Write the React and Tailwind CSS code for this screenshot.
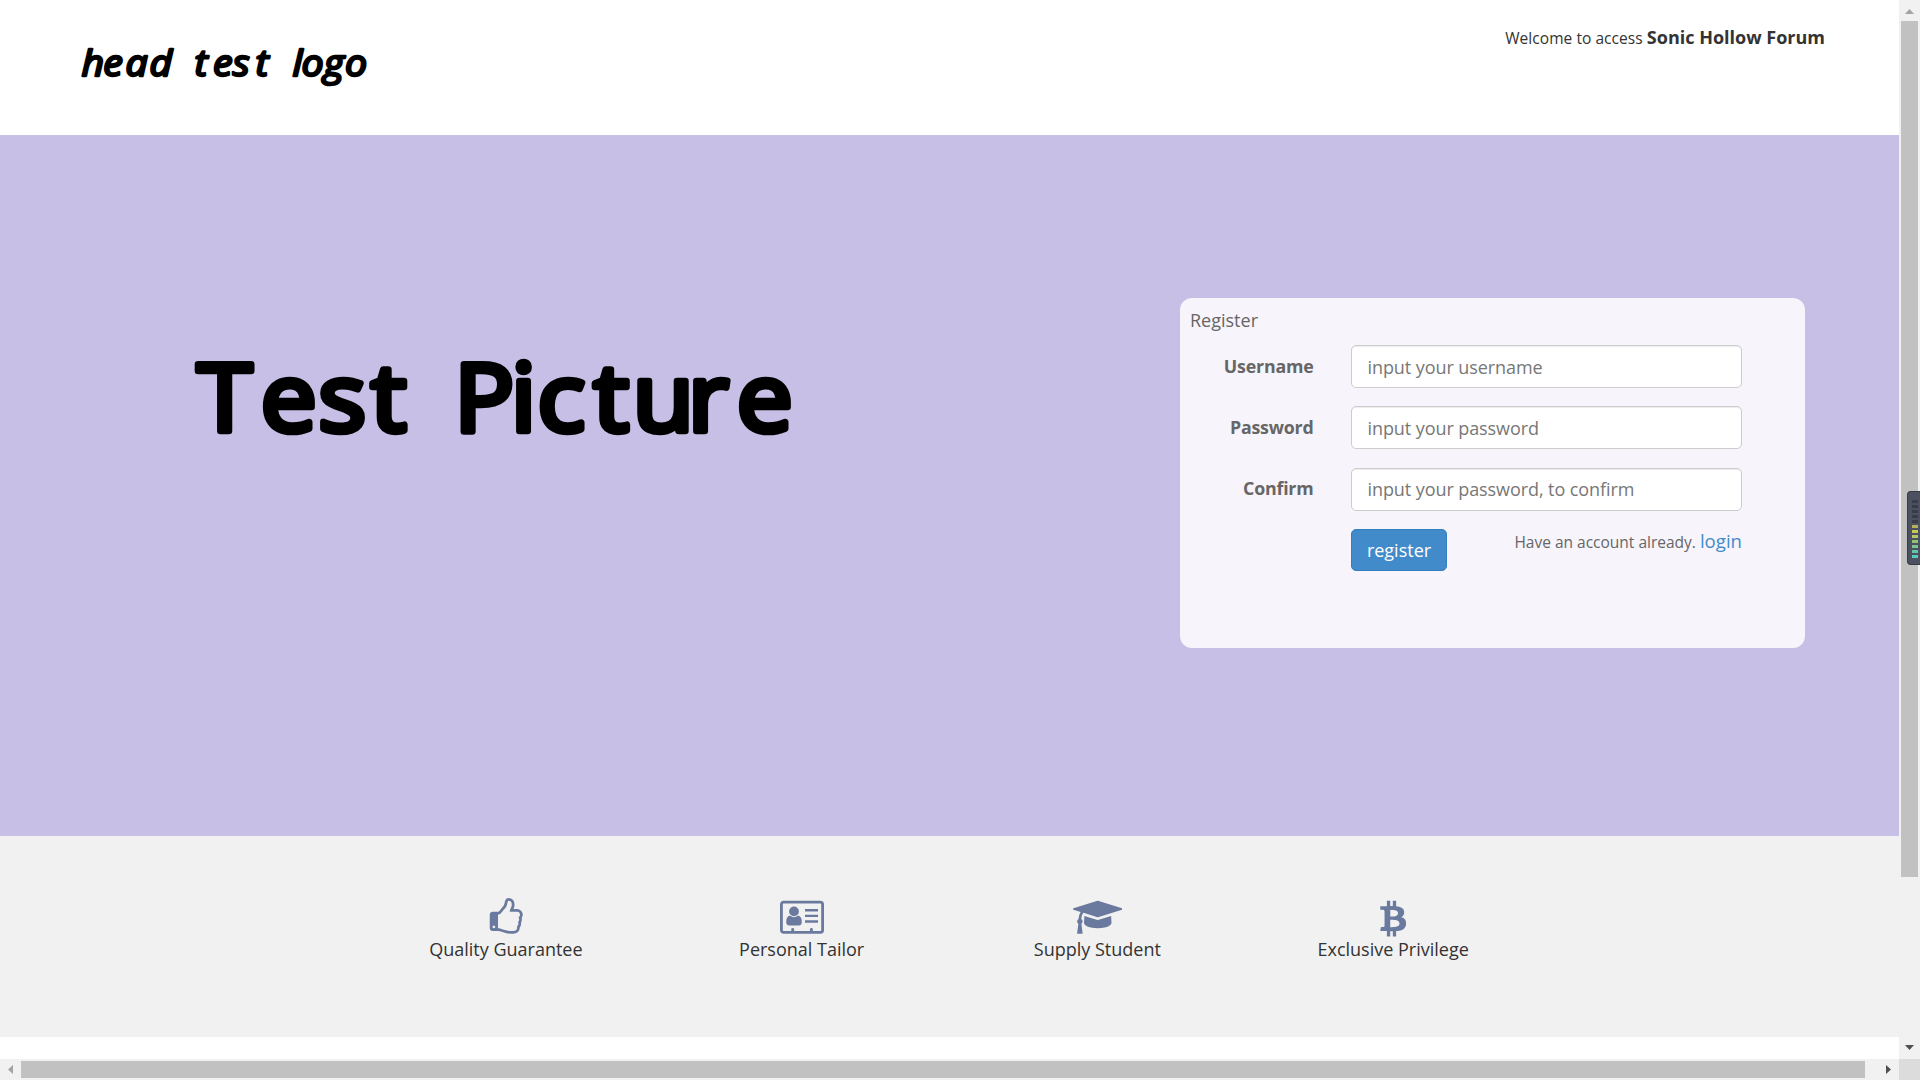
const ICONS = {
  thumb:
    "M384 1344q0-26-19-45t-45-19-45 19-19 45 19 45 45 19 45-19 19-45zm1152-576q0-51-39-89.5t-89-38.5h-352q0-58 48-159.5t48-160.5q0-98-32-145t-128-47q-26 26-38 85t-30.5 125.5-59.5 109.5q-22 23-77 91-4 5-23 30t-31.5 41-34.5 42.5-40 44-38.5 35.5-40 27-35.5 9h-32v640h32q13 0 31.5 3t33 6.5 38 11 35 11.5 35.5 12.5 29 10.5q211 73 342 73h121q192 0 192-167 0-26-5-56 30-16 47.5-52.5t17.5-73.5-18-69q53-50 53-119 0-25-10-55.5t-25-47.5q32-1 53.5-47t21.5-81zm128-1q0 89-49 163 9 33 9 69 0 77-38 144 3 21 3 43 0 101-60 178 1 139-85 219.5t-227 80.5h-129q-96 0-189.5-22.5t-216.5-65.5q-116-40-138-40h-288q-53 0-90.5-37.5t-37.5-90.5v-640q0-53 37.5-90.5t90.5-37.5h274q36-24 137-155 58-75 107-128 24-25 35.5-85.5t30.5-126.5 62-108q39-37 90-37 84 0 151 32.5t102 101.5 35 186q0 93-48 192h176q104 0 180 76t76 179z",
  cap: "M1774 836l18 316q4 69-82 128t-235 93.5-323 34.5-323-34.5-235-93.5-82-128l18-316 574 181q22 7 48 7t48-7zm530-324q0 23-22 31l-1120 352q-4 1-10 1t-10-1l-652-206q-43 34-71 111.5t-34 178.5q63 36 63 109 0 69-58 107l58 433q2 14-8 25-9 11-24 11h-192q-15 0-24-11-10-11-8-25l58-433q-58-38-58-107 0-73 65-111 11-207 98-330l-333-104q-22-8-22-31t22-31l1120-352q4-1 10-1t10 1l1120 352q22 8 22 31z",
  bitcoin:
    "M1362 642q18 182-131 258 117 28 175 103t45 214q-7 71-32.5 125t-64.5 89-97 58.5-121.5 34.5-145.5 15v255h-154v-251q-80 0-122-1v252h-154v-255q-18 0-54-.5t-55-.5h-200l31-183h111q50 0 58-51v-402h16q-6-1-16-1v-287q-13-68-89-68h-111v-164l212 1q64 0 97-1v-252h154v247q82-2 122-2v-245h154v252q79 7 140 22.5t113 45 82.5 78 36.5 114.5zm-215 545q0-36-15-64t-37-46-57.5-30.5-65.5-18.5-74-9-69-3-64.5 1-47.5 1v338q8 0 37 .5t48 .5 53-1.5 58.5-4 57-8.5 55.5-14 47.5-21 39.5-30 24.5-40 9.5-51zm-71-476q0-33-12.5-58.5t-30.5-42-48-28-55-16.5-61.5-8-58-2.5-54 1-39.5.5v307q5 0 34.5.5t46.5 0 50-2 55-5.5 51.5-11 48.5-18.5 37-27 27-38.5 9-51z",
};

function PathIcon({ d, box, className }) {
  return (
    <svg viewBox={box} className={className} fill="currentColor">
      <path d={d} />
    </svg>
  );
}

function CardIcon() {
  return (
    <svg viewBox="0 0 44 38.5" className="h-[38.5px] w-[44px]" fill="currentColor">
      <rect x="1.4" y="4.2" width="41.2" height="30.2" rx="2.2" fill="none" stroke="currentColor" strokeWidth="2.8" />
      <circle cx="14" cy="13.4" r="4.9" />
      <path d="M10 17.6q4 3.2 8 0q3.8.8 3.8 6.400q0 3.400-3 3.400h-9.600q-3 0-3-3.400q0-5.600 3.800-6.400z" />
      <path d="M25 11h13v2.600h-13zM25 16.800h13v2.200h-13zM25 22.200h13v2.600h-13zM11.300 30.400q1.400-1 2.800 0v3h-2.800zM30 30.400q1.400-1 2.800 0v3h-2.800z" />
    </svg>
  );
}

function Feature({ icon, label }) {
  return (
    <div className="flex flex-col items-center">
      <div className="flex h-[38.5px] items-center text-[#6a7a9f]">{icon}</div>
      <div className="text-[18px] leading-[25px] whitespace-nowrap text-[#333]">{label}</div>
    </div>
  );
}

function Field({ label, placeholder, type }) {
  return (
    <div className="mb-[18.4px] flex h-[43px] items-center">
      <label className="w-[133.5px] text-right text-[17.8px] leading-none font-bold tracking-[-0.2px]">{label}</label>
      <input
        type={type}
        placeholder={placeholder}
        className="ml-[37.5px] h-[43px] w-[391px] rounded-[5px] border border-[#ccc] bg-white px-[15.500px] text-[18px] tracking-[-0.08px] shadow-[inset_0_1px_1px_rgba(0,0,0,0.075)] outline-none placeholder:text-[#777]"
      />
    </div>
  );
}

const METER = [
  "bg-[#373c48]", "bg-[#373c48]", "bg-[#373c48]", "bg-[#373c48]", "bg-[#373c48]",
  "bg-[#b3b05a]", "bg-[#c9c84e]", "bg-[#b4c865]", "bg-[#8fc472]", "bg-[#79c68c]", "bg-[#5fc9a5]", "bg-[#57cdb9]",
];

export default function App() {
  return (
    <div className="relative flex h-[1080px] w-[1920px] flex-col overflow-hidden bg-white font-['Open_Sans','Noto_Sans',sans-serif] text-[#333]">
      <div className="flex h-[1059px]">
        <div className="flex w-[1899px] flex-col">
          <header className="flex h-[135px] items-start justify-between pr-[74px] pl-[72px]">
            <svg width="310" height="110" viewBox="72 0 310 110" className="overflow-visible">
              <text
                transform="scale(1.06 1)"
                x="77 97.500 118.500 141 165 183.500 201 219.500 241 260 276 284.500 305.500 325.500"
                y="76.500"
                className="font-['Open_Sans',sans-serif] text-[37px] font-normal italic"
                fill="#000"
                stroke="#000"
                strokeWidth="2.4"
                strokeLinejoin="round"
              >
                head test logo
              </text>
            </svg>
            <p className="mt-[23px] text-[15.5px] leading-[28px] tracking-[0.06px] whitespace-nowrap">
              Welcome to access <b className="text-[18px] tracking-normal">Sonic Hollow Forum</b>
            </p>
          </header>

          <main className="flex h-[701px] items-start justify-between bg-[#c7bfe6] pr-[94px] pl-[170px]">
            <svg width="640" height="140" viewBox="170 330 640 140" className="mt-[195px] overflow-visible">
              <text
                transform="scale(1.06 1)"
                x="186 246 300.500 350 400 428.500 482 507 560 597 649 695"
                y="431"
                className="font-['Open_Sans',sans-serif] text-[94px] font-normal"
                fill="#000"
                stroke="#000"
                strokeWidth="6.500"
                strokeLinejoin="round"
                strokeLinecap="round"
              >
                Test Picture
              </text>
            </svg>

            <section className="mt-[163px] h-[350px] w-[625px] rounded-[12px] bg-[#f7f4fb] text-[#666]">
              <h1 className="pt-[9px] pl-[10px] text-[18px] leading-[26px] font-normal">Register</h1>
              <form className="mt-[12px]" onSubmit={(e) => e.preventDefault()}>
                <Field label="Username" placeholder="input your username" type="text" />
                <Field label="Password" placeholder="input your password" type="password" />
                <Field label="Confirm" placeholder="input your password, to confirm" type="password" />
                <div className="ml-[171px] flex w-[391px] items-start justify-between">
                  <button className="h-[42px] w-[96px] rounded-[5px] border border-[#357ebd] bg-[#428bca] text-[18px] leading-none text-white">
                    register
                  </button>
                  <p className="-mt-[1px] text-[15.5px] leading-[26px] whitespace-nowrap">
                    Have an account already. <a className="text-[18.6px] text-[#428bca]">login</a>
                  </p>
                </div>
              </form>
            </section>
          </main>

          <section className="flex h-[201px] justify-center bg-[#f1f1f1] pt-[62px]">
            <div className="grid w-[1183px] grid-cols-4">
              <Feature icon={<PathIcon d={ICONS.thumb} box="0 0 1792 1792" className="h-[38.5px] w-[38.5px]" />} label="Quality Guarantee" />
              <Feature icon={<CardIcon />} label="Personal Tailor" />
              <Feature icon={<PathIcon d={ICONS.cap} box="0 0 2304 1792" className="h-[38.5px] w-[49.5px]" />} label="Supply Student" />
              <Feature icon={<PathIcon d={ICONS.bitcoin} box="-40 0 1792 1792" className="h-[38.5px] w-[38.5px]" />} label="Exclusive Privilege" />
            </div>
          </section>
        </div>

        <div className="flex w-[21px] flex-col items-center justify-between bg-[#f1f1f1]">
          <div className="flex h-[21px] items-center">
            <svg width="9" height="5" viewBox="0 0 9 5" className="mt-[2px]"><path d="M0 5L4.500 0L9 5z" fill="#a3a3a3" /></svg>
          </div>
          <div className="mb-auto h-[856px] w-[17px] bg-[#c1c1c1]" />
          <div className="flex h-[21px] items-center">
            <svg width="9" height="5" viewBox="0 0 9 5" className="-mt-[2px]"><path d="M0 0L4.500 5L9 0z" fill="#505050" /></svg>
          </div>
        </div>
      </div>

      <div className="flex h-[21px] items-center bg-[#f1f1f1]">
        <div className="flex w-[21px] justify-center">
          <svg width="5" height="9" viewBox="0 0 5 9"><path d="M5 0L0 4.500L5 9z" fill="#a3a3a3" /></svg>
        </div>
        <div className="h-[17px] w-[1844px] bg-[#c1c1c1]" />
        <div className="flex flex-1 justify-end pr-[8px]">
          <svg width="5" height="9" viewBox="0 0 5 9"><path d="M0 0L5 4.500L0 9z" fill="#505050" /></svg>
        </div>
        <div className="h-[21px] w-[21px] bg-[#dcdcdc]" />
      </div>

      <div className="absolute top-[491px] right-0 flex h-[74px] w-[13px] flex-col items-end gap-[2px] rounded-l-[4px] border border-r-0 border-[#363b46] bg-[#4b5160] pt-[8px] pr-[2px]">
        {METER.map((c, i) => (
          <div key={i} className={`h-[3px] w-[6px] ${c}`} />
        ))}
      </div>
    </div>
  );
}
